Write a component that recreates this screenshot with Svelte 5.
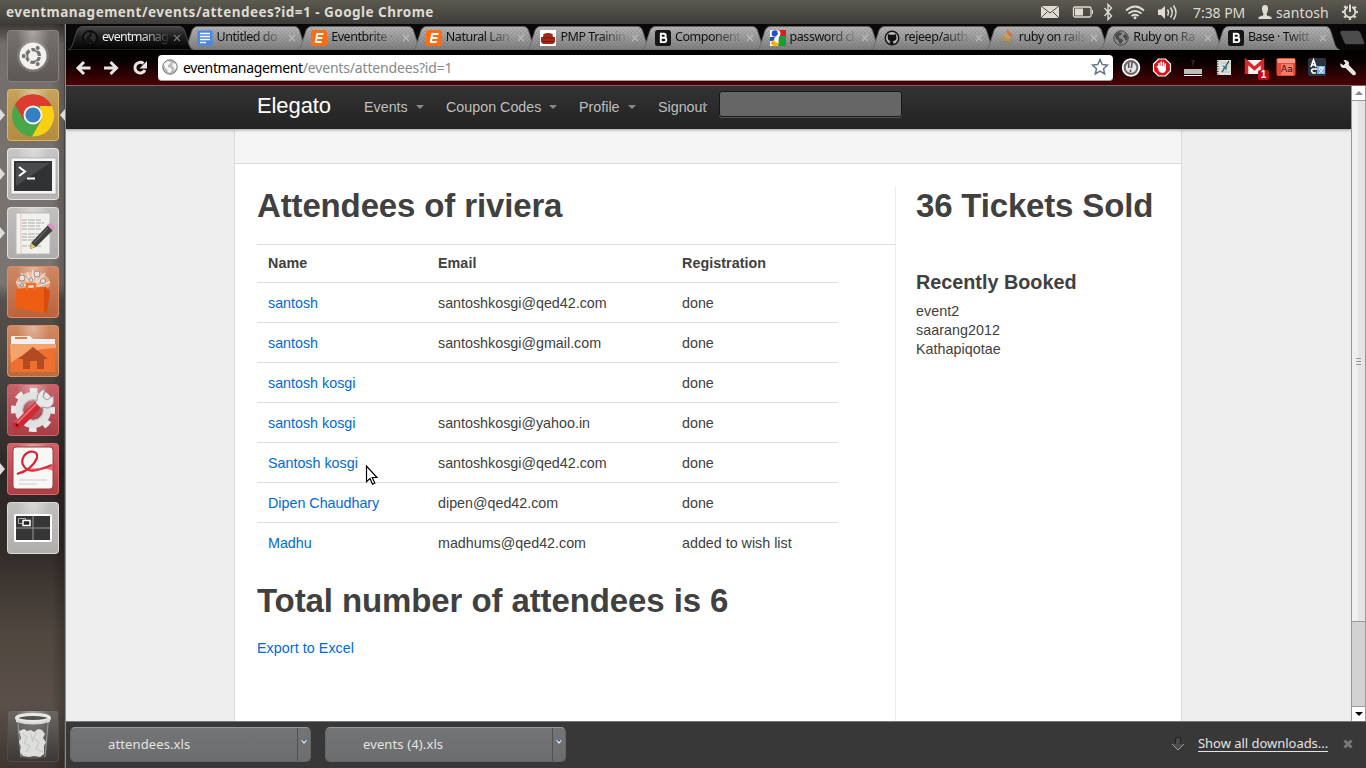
<script>
  const tabs = [
    { icon: 'darkglobe', title: 'eventmanag', active: true },
    { icon: 'doc', title: 'Untitled do' },
    { icon: 'eb', title: 'Eventbrite ·' },
    { icon: 'eb', title: 'Natural Lan' },
    { icon: 'sofa', title: 'PMP Trainin' },
    { icon: 'boot', title: 'Component' },
    { icon: 'google', title: 'password cl' },
    { icon: 'github', title: 'rejeep/auth' },
    { icon: 'so', title: 'ruby on rails' },
    { icon: 'globe', title: 'Ruby on Ra' },
    { icon: 'boot', title: 'Base · Twitt' }
  ];
  const exts = ['shield', 'adblock', 'input', 'note', 'gmail', 'dict', 'translate', 'wrench'];
  const launcher = [
    { k: 'ubuntu', a: '#77726e', b: '#5b5754', e: '#86827e' },
    { k: 'chromium', a: '#c6a35b', b: '#b28b3e', e: '#dcb75f', run: true, focus: true },
    { k: 'term', a: '#c6c6c6', b: '#b4b4b4', e: '#e4e4e4', run: true },
    { k: 'edit', a: '#c2bfbf', b: '#aeabac', e: '#dedcdc', run: true },
    { k: 'bag', a: '#d08764', b: '#b8633d', e: '#dc8c63' },
    { k: 'home', a: '#d08960', b: '#b96a3f', e: '#dc925f' },
    { k: 'gear', a: '#c5636a', b: '#a83e46', e: '#d45f66' },
    { k: 'pdf', a: '#cd646a', b: '#ae3e43', e: '#df686c', run: true },
    { k: 'work', a: '#c0c0be', b: '#aeaeac', e: '#dadad8' }
  ];
  const attendees = [
    ['santosh', 'santoshkosgi@qed42.com', 'done'],
    ['santosh', 'santoshkosgi@gmail.com', 'done'],
    ['santosh kosgi', '', 'done'],
    ['santosh kosgi', 'santoshkosgi@yahoo.in', 'done'],
    ['Santosh kosgi', 'santoshkosgi@qed42.com', 'done'],
    ['Dipen Chaudhary', 'dipen@qed42.com', 'done'],
    ['Madhu', 'madhums@qed42.com', 'added to wish list']
  ];
  const booked = ['event2', 'saarang2012', 'Kathapiqotae'];
  const files = ['attendees.xls', 'events (4).xls'];
</script>

{#snippet favicon(k)}
  <svg class="fav" width="16" height="16" viewBox="0 0 16 16">
    {#if k === 'darkglobe'}
      <circle cx="8" cy="8" r="7.3" fill="#151515" stroke="#050505" />
      <path d="M3 4l3-2 2 1-2 3-2 2-1 2-1-3zM9 3l4 1 1 4-2 4-2-2-2-2 2-2z" fill="#2f2f2f" />
    {:else if k === 'globe' || k === 'urlglobe'}
      <circle cx="8" cy="8" r="7.2" fill={k === 'globe' ? '#8b8b8b' : '#b9b9b9'} stroke={k === 'globe' ? '#444' : '#777'} />
      <path d="M2 5l3-3 4 1-1 2-2 1 0 2 3 1 1 2-2 3-2-1-1-3-2-1zM11 4l3 1 0.5 4-2 2-1-3-1.500-1z" fill={k === 'globe' ? '#4b4b4b' : '#f6f6f6'} />
    {:else if k === 'doc'}
      <path d="M.5.5h15v15H.5z" fill="#4a86e8" />
      <path d="M3 3.500h10M3 6.500h10M3 9.500h10M3 12.500h6" stroke="#fff" stroke-width="1.400" />
    {:else if k === 'eb'}
      <rect width="16" height="16" rx="2.500" fill="#ff6d13" />
      <path d="M6 4h6.500M5.300 8h6M4.200 12h6.500M6.300 3.500L4.700 12.500" stroke="#fff" stroke-width="2" fill="none" />
    {:else if k === 'sofa'}
      <path d="M0 0h16v16H0z" fill="#fff" />
      <path d="M3.500 4Q8 2 12.500 4L13 7h2v5l-2 2H3l-2-2V7h2z" fill="#a5281b" />
      <path d="M3 8h10M2 11.500h12" stroke="#6f1710" />
    {:else if k === 'boot'}
      <rect width="16" height="16" rx="2.500" fill="#151515" />
      <path d="M5.800 3.800h3a1.800 1.800 0 0 1 0 3.900h-3zM5.800 7.700h3.300a2 2 0 0 1 0 4.400H5.800z" stroke="#fff" stroke-width="1.900" fill="none" />
    {:else if k === 'google'}
      <path d="M0 0h16v16H0z" fill="#fff" />
      <path d="M8 0h8v6H10z" fill="#e11b1b" /><path d="M9 6h7v10H8z" fill="#12a03c" /><path d="M0 7h5v4H0z" fill="#2450b8" />
      <circle cx="5" cy="3.500" r="3.300" fill="#2853c6" /><ellipse cx="5" cy="13" rx="4" ry="3" fill="#f5b400" />
      <path d="M8 1q3 3-1 6t1 5" stroke="#fff" stroke-width="2.500" fill="none" />
    {:else if k === 'github'}
      <circle cx="8" cy="8" r="7.500" fill="#151515" /><circle cx="8" cy="8" r="6" fill="#bbb" />
      <path d="M4 4l2 .8h4L12 4q.3 1 .1 2 1 3-1 4.500l-2 .6.500 3.400H6.200v-1.700l-2.200-1h2l.7-.900Q3 10.500 3.800 6 3.500 5 4 4z" fill="#111" />
    {:else if k === 'so'}
      <path d="M1.500 9.500v5h11v-5M3.500 12h7" stroke="#8b8478" stroke-width="1.600" fill="none" />
      <path d="M3.500 8.700l7 1.300" stroke="#c99430" stroke-width="2" /><path d="M4.500 4.500l6.500 3.700" stroke="#ef9a22" stroke-width="2" /><path d="M8 1l5 5" stroke="#f2642a" stroke-width="2" />
    {/if}
  </svg>
{/snippet}

{#snippet ext(k)}
  <svg class="ext" width="22" height="22" viewBox="0 0 22 22">
    {#if k === 'shield'}
      <circle cx="11" cy="10.500" r="8.300" fill="#6a6a6a" stroke="#fff" stroke-width="1.800" />
      <circle cx="11" cy="10.500" r="5.300" fill="#e6e6e6" /><path d="M12.300 4.500l-1 6.500M8.700 6v5M10.500 12.500v2.500" stroke="#555" stroke-width="1.600" />
    {:else if k === 'adblock'}
      <path d="M7.500 2h7l5 5v7l-5 5h-7l-5-5V7z" fill="#d8141a" stroke="#fff" stroke-width="1.200" />
      <path d="M8 10V6.500M10.200 9V5M12.400 9V5.500M14.300 10V7" stroke="#fff" stroke-width="1.500" stroke-linecap="round" />
      <path d="M7.300 9H15v4q-1 3-4 3-2.500 0-3.700-3z" fill="#fff" /><path d="M6 9l2.500 3" stroke="#fff" stroke-width="1.500" />
    {:else if k === 'input'}
      <path d="M9.500 4q1.500-1.500 2.500 0 0 1.300-1.300 2v1.500M10.700 8.500v1" stroke="#3a3434" stroke-width="1.200" fill="none" />
      <path d="M2 12h18v5H2z" fill="#bcbcbc" /><path d="M2 18.500h18" stroke="#fff" />
    {:else if k === 'note'}
      <path d="M4 3h14v15H4z" fill="#dfdfda" /><path d="M4.500 4v14" stroke="#333" stroke-dasharray="1 1.500" stroke-width="2" />
      <path d="M8 6h9M8 15h9" stroke="#b9b9c4" /><path d="M16 4L9 15" stroke="#374a40" stroke-width="1.300" /><path d="M9 8.500l5.500 1-1.500 4z" fill="#2a86b6" /><path d="M13.500 9.500l1.500-1.500 1 2z" fill="#f1cb24" />
    {:else if k === 'gmail'}
      <path d="M1 3h19v14H1z" fill="#f4f1f1" /><path d="M2.500 17V4.500l8 7 8-7V17" stroke="#d9272a" stroke-width="3.500" fill="none" />
    {:else if k === 'dict'}
      <rect x="1.500" y="1" width="19" height="18" rx="2" fill="#e44b3b" /><path d="M2 2h18v4H3z" fill="#fa9b87" />
    {:else if k === 'translate'}
      <rect x="2" y="1" width="18" height="18" rx="2" fill="#2b3440" />
      <path d="M5 10l2.500-7L10 10M6 8h3M11 12H7q-3 1 0 4h3" stroke="#fff" stroke-width="1.700" fill="none" />
      <path d="M11 9h8v8h-8z" fill="#78b3ea" /><path d="M12.500 11h5.500M15 9.500v2M17 11q-1 4-4 5M13 12l4 4" stroke="#fff" fill="none" />
    {:else}
      <path d="M3.500 6.200l3 2 2-2-2-3Q10 2 12 5.500L11.800 8l6.700 7q1.200 2.500-1 3.300-1.500.2-2.300-.9L8.500 11 6 11Q2.500 9.500 3.500 6.200z" fill="#eae6e6" />
    {/if}
  </svg>
{/snippet}

{#snippet app(k)}
  <svg width="52" height="52" viewBox="0 0 52 52">
    {#if k === 'ubuntu'}
      <circle cx="26" cy="26" r="16" fill="#aaa5a1" opacity=".35" /><circle cx="26" cy="26" r="13.500" fill="#f2f1f0" />
      <circle cx="26" cy="26" r="6.400" fill="none" stroke="#77716d" stroke-width="3.200" stroke-dasharray="11.400 2" stroke-dashoffset="-1" />
      <g fill="#77716d" stroke="#f2f1f0"><circle cx="16.700" cy="26" r="2.500" /><circle cx="30.700" cy="18" r="2.500" /><circle cx="30.700" cy="34" r="2.500" /></g>
    {:else if k === 'chromium'}
      <circle cx="26" cy="26.500" r="21" fill="#48a747" />
      <path d="M8 15.500A21 21 0 0 1 44.800 17H26L16.500 30.500z" fill="#dc3b32" />
      <path d="M44.800 17A21 21 0 0 1 25 47.500L35 30 33 17z" fill="#fbcf12" />
      <circle cx="26" cy="26" r="9.500" fill="#f2f2f2" /><circle cx="26" cy="26" r="7.600" fill="#377fc0" />
    {:else if k === 'term'}
      <rect x="4" y="10" width="45" height="36" rx="1" fill="#f4f4f4" stroke="#999" stroke-width=".6" /><path d="M7 13h38v30H7z" fill="#303234" /><path d="M9 15h34L9 38z" fill="#484b4e" />
      <path d="M12 19l6 4.500-6 4.500M20 30.500h8" stroke="#fff" stroke-width="2" fill="none" />
    {:else if k === 'edit'}
      <path d="M9 6h34v41H9z" fill="#f1f1ee" stroke="#bbb" />
      <path d="M15 13h20M15 16h22M15 19h18M15 22h20M15 27h22M15 30h20M15 33h17M15 39h20" stroke="#aaa" stroke-dasharray="5 1 7 1" /><path d="M14 6v41" stroke="#f2c1c1" />
      <path d="M24 36L41 18l5 5-17 17-6 2z" fill="#404040" /><path d="M40 18l3-2 5 4-2 4z" fill="#df91bd" /><path d="M24 36l5 4-6 2z" fill="#e1c27c" />
      <path d="M27 36l14-15" stroke="#777" />
    {:else if k === 'bag'}
      <ellipse cx="26" cy="17" rx="17" ry="11" fill="#ffd9c0" opacity=".5" />
      <path d="M26 22L14 7M26 22V4M26 22L38 7M26 22L9 16M26 22l17-6M26 22L20 6M26 22l7-16" stroke="#fff1e6" stroke-width="1.500" opacity=".7" />
      <g fill="#f4ded4" stroke="#8896a0"><circle cx="15" cy="12" r="3" /><circle cx="30" cy="8" r="3" /><circle cx="36" cy="15" r="2.500" /><circle cx="24" cy="14" r="2" /><circle cx="15" cy="19" r="1.500" /></g>
      <path d="M9 23l30-2 4 4-3 22-31-5z" fill="#d94c0c" /><path d="M9 23l28-2v26L9 42z" fill="#ed5e12" /><path d="M20 24v-6h8v6" stroke="#f17124" stroke-width="2.500" fill="none" />
    {:else if k === 'home'}
      <path d="M4 11h19l3 3h22v9H4z" fill="#f0f0f0" /><path d="M8 13h12" stroke="#f3783d" stroke-width="2" />
      <path d="M3 19h46l-1 28H4z" fill="#ed7031" /><path d="M3 19h46v4Q20 24 4 38z" fill="#f5a36c" />
      <path d="M26 22l15 12h-4v10h-7v-8h-7v8h-7V34h-5z" fill="#b34a22" />
    {:else if k === 'gear'}
      <circle cx="26" cy="26" r="19" fill="none" stroke="#e9e9e9" stroke-width="6" stroke-dasharray="7.460 7.460" stroke-dashoffset="3.700" />
      <circle cx="26" cy="26" r="14" fill="none" stroke="#e1e1e1" stroke-width="8" /><circle cx="26" cy="26" r="10.500" fill="none" stroke="#bbb" />
      <path d="M30 16q0-9 8-11l-2 8 4 3 6-4q3 9-5 12l-6-1-3 2-5-4z" fill="#e8e8e8" stroke="#999" />
      <path d="M8 38L28 18l6 6-21 21q-4 2-7-2-1-3 2-5z" fill="#cc2a34" /><path d="M10 39l19-19" stroke="#ed6870" stroke-width="2" /><circle cx="10" cy="41" r="1.500" fill="#6e1218" />
    {:else if k === 'pdf'}
      <rect x="6" y="4" width="40" height="42" rx="3" fill="#f7f7f5" stroke="#9d3a3e" />
      <path d="M10 31q15-4 20-16c2-7-8-9-13-2-5 8 2 17 13 14q8-2 15-5" stroke="#d92431" stroke-width="2.200" fill="none" /><path d="M20 26q12 5 26-5v7q-8-4-26-2z" fill="#e04b53" opacity=".8" />
      <path d="M12 37h28M12 41h18" stroke="#ccc" />
    {:else if k === 'work'}
      <rect x="7" y="12" width="38" height="28" rx="1.500" fill="#fff" /><path d="M9 14h34v24H9z" fill="#363636" />
      <path d="M26 14v24M9 26h34" stroke="#999" /><path d="M11.500 16.500h7v5h-7z" fill="#333" stroke="#aaa" /><path d="M16 18.500h7v5h-7z" fill="#222" stroke="#fff" stroke-width="1.500" />
    {:else}
      <path d="M9 9h34l-4 38q-13 4-26 0z" fill="#6a6867" opacity=".55" /><path d="M11 13l3 34M41 13l-3 34" stroke="#999" />
      <path d="M12 21l5-2 3 2 4-1 3 2 4-3 4 1 3 4-2 4 3 4-2 4v8l-4 3-6-1-5 1-6-1-3-4 1-5-2-5 2-4z" fill="#dddedc" />
      <path d="M15 23l5 4-3 6 6 3-4 6M30 22l-4 6 6 4-3 7 7 3M24 24l2 8" stroke="#c3c4c2" fill="none" />
      <ellipse cx="26" cy="8" rx="16.500" ry="3.500" fill="#55504d" stroke="#e8e8e6" stroke-width="3" /><path d="M9 9q17 7 34 0v3q-17 5-34 0z" fill="#d8d8d6" />
    {/if}
  </svg>
{/snippet}

<div class="desktop">
  <header class="panel">
    <span class="wtitle">eventmanagement/events/attendees?id=1 - Google Chrome</span>
    <div class="tray">
      <svg width="175" height="24" viewBox="0 0 175 24">
        <path d="M1 6h18v12H1z" fill="#dfdbd2" /><path d="M1 6l9 7 9-7M1 18l6-6M19 18l-6-6" stroke="#4b4943" fill="none" />
        <rect x="33.500" y="7" width="17.500" height="10" rx="1.500" fill="none" stroke="#dfdbd2" stroke-width="1.300" /><path d="M35 8.500h8v7h-8z" fill="#dfdbd2" /><path d="M52.500 10v4" stroke="#dfdbd2" />
        <path d="M64.500 8l7 8-3.500 3.500V4.500L71.500 8l-7 8" stroke="#dfdbd2" stroke-width="1.400" fill="none" />
        <path d="M86 10.500q9-8 18 0M88.500 13.500q6.500-5 13 0M91.500 16q3.500-2.500 7 0" stroke="#dfdbd2" stroke-width="2" fill="none" /><circle cx="95" cy="17.800" r="1.500" fill="#dfdbd2" />
        <path d="M118 9.500h3l4-3.500v13l-4-4h-3z" fill="#dfdbd2" /><path d="M127.500 9.500q2 3 0 6M130.500 7.500q3.500 5 0 10M133.500 5.500q5 7 0 14" stroke="#dfdbd2" stroke-width="1.500" fill="none" />
      </svg>
      <span class="clock">7:38 PM</span>
      <svg class="person" width="14" height="16" viewBox="0 0 14 16"><path d="M7 1q3.500 0 3 4.500Q9.500 9 8.500 10l.5 1.500 4.500 1.500v2H.500v-2L5 11.500l.5-1.500Q4.500 9 4 5.500 3.500 1 7 1z" fill="#dfdbd2" /></svg>
      <span class="user">santosh</span>
      <svg class="power" width="18" height="18" viewBox="0 0 18 18"><circle cx="9" cy="9" r="5.300" fill="none" stroke="#dfdbd2" stroke-width="1.800" /><circle cx="9" cy="9" r="7" fill="none" stroke="#dfdbd2" stroke-width="2" stroke-dasharray="2.400 3.100" stroke-dashoffset="1.200" /><path d="M9 1v8" stroke="#4b4943" stroke-width="4" /><path d="M9 1.500V9" stroke="#dfdbd2" stroke-width="2" /></svg>
    </div>
  </header>

  <div class="body">
    <aside class="launcher">
      {#each launcher as l}
        <div class="tile" style="--a:{l.a};--b:{l.b};--e:{l.e}">
          {@render app(l.k)}
          {#if l.run}<i class="run"></i>{/if}
          {#if l.focus}<i class="focus"></i>{/if}
        </div>
      {/each}
      <div class="tile trash" style="--a:#6c6765;--b:#3b3736;--e:#504b49">{@render app('trash')}</div>
    </aside>

    <section class="chrome">
      <div class="tabs">
        {#each tabs as t}
          <div class="tab" class:active={t.active}>
            <svg class="shape" width="128" height="24" viewBox="0 0 128 24" preserveAspectRatio="none">
              <defs>
                <linearGradient id="tg" x2="0" y2="1"><stop offset="0" stop-color="#bababa" /><stop offset="1" stop-color="#7e7e7e" /></linearGradient>
                <linearGradient id="ta" x2="0" y2="1"><stop offset="0" stop-color="#484848" /><stop offset=".45" stop-color="#1c1c1c" /><stop offset="1" stop-color="#020202" /></linearGradient>
                <pattern id="chk" width="4" height="4" patternUnits="userSpaceOnUse"><path d="M0 0h2v2H0zM2 2h2v2H2z" fill="#555" opacity=".2" /></pattern>
              </defs>
              <path d="M0 24Q3 23.500 4.500 19L9 5Q10.500.500 15 .500H113Q117 .500 118.500 5L123 19Q124.500 23.500 128 24z" fill={t.active ? 'url(#ta)' : 'url(#tg)'} stroke={t.active ? '#555' : '#686868'} stroke-width=".8" />
              {#if !t.active}<path d="M0 24Q3 23.500 4.500 19L9 5Q10.500.500 15 .500H113Q117 .500 118.500 5L123 19Q124.500 23.500 128 24z" fill="url(#chk)" />{/if}
            </svg>
            {@render favicon(t.icon)}
            <span class="tt">{t.title}</span>
            <svg class="x" width="8" height="8" viewBox="0 0 8 8"><path d="M1 1l6 6M7 1L1 7" stroke={t.active ? '#777' : '#b9b9b9'} stroke-width="1.300" /></svg>
          </div>
        {/each}
        <svg class="newtab" width="26" height="16" viewBox="0 0 26 16"><path d="M3 .500H19q2 0 3 3l3.500 9q.500 2-1.500 2H8q-2 0-3-2L1 3Q.500.500 3 .500z" fill="#4c4c4c" stroke="#161616" /></svg>
      </div>

      <div class="toolbar">
        <svg class="nav" width="80" height="20" viewBox="0 0 80 20">
          <g stroke="#e9e5e5" stroke-width="3" fill="none"><path d="M15.500 10H3M9 4l-6 6 6 6" /><path d="M29 10h12.500M35.500 4l6 6-6 6" /><path d="M68.500 5.500a5.300 5.300 0 1 0 1.500 6.500" /></g>
          <path d="M72 3v7.500h-7.500z" fill="#e9e5e5" />
        </svg>
        <div class="omni">
          {@render favicon('urlglobe')}
          <span class="url"><b>eventmanagement</b>/events/attendees?id=1</span>
          <svg class="star" width="18" height="18" viewBox="0 0 18 18"><path d="M9 1.500l2.200 5 5.300.500-4 3.700 1.200 5.300L9 13.200 4.300 16l1.200-5.300-4-3.700 5.300-.5z" fill="#fff" stroke="#68748f" stroke-width="1.500" /></svg>
        </div>
        <div class="exts">
          {#each exts as e}
            <div class="extbox">
              {@render ext(e)}
              {#if e === 'gmail'}<span class="badge">1</span>{/if}
              {#if e === 'dict'}<span class="aa">Aa</span>{/if}
            </div>
          {/each}
        </div>
      </div>

      <div class="view">
        <div class="page">
          <nav class="topbar">
            <span class="brand">Elegato</span>
            <span class="m1">Events<i></i></span>
            <span class="m2">Coupon Codes<i></i></span>
            <span class="m3">Profile<i></i></span>
            <span class="m4">Signout<i></i></span>
            <div class="search"></div>
          </nav>
          <div class="container">
            <div class="strip"></div>
            <div class="cols">
              <main>
                <h1>Attendees of riviera</h1>
                <div class="tablewrap">
                  <table>
                    <thead><tr><th class="c1">Name</th><th class="c2">Email</th><th>Registration</th></tr></thead>
                    <tbody>
                      {#each attendees as [n, e, r]}
                        <tr><td><span class="link">{n}</span></td><td>{e}</td><td>{r}</td></tr>
                      {/each}
                    </tbody>
                  </table>
                </div>
                <h1 class="total">Total number of attendees is 6</h1>
                <span class="link export">Export to Excel</span>
              </main>
              <aside class="side">
                <h1>36 Tickets Sold</h1>
                <h3>Recently Booked</h3>
                {#each booked as b}<div class="bk">{b}</div>{/each}
              </aside>
            </div>
          </div>
        </div>
        <div class="scroll">
          <div class="btn up"><i></i></div>
          <div class="thumb"><i></i><i></i><i></i></div>
          <div class="trough"></div>
          <div class="btn down"><i></i></div>
        </div>
      </div>

      <footer class="downloads">
        {#each files as f}
          <div class="dl"><span>{f}</span><em><svg width="6" height="4" viewBox="0 0 6 4"><path d="M0 0h6L3 4z" fill="#eee" /><path d="M1 0h4L3 2z" fill="#3465b4" /></svg></em></div>
        {/each}
        <svg class="arr" width="14" height="14" viewBox="0 0 14 14"><path d="M4.500.500h5V7H13l-6 6-6-6h3.500z" fill="#4b4b4b" /><path d="M4.500 7V.800h5V7" stroke="#222" fill="none" /><path d="M1 7l6 6 6-6" stroke="#999" fill="none" /></svg>
        <span class="all">Show all downloads...</span>
        <svg class="cl" width="10" height="10" viewBox="0 0 10 10"><path d="M1.500 1.500l7 7M8.500 1.500l-7 7" stroke="#777" stroke-width="3" /></svg>
      </footer>
    </section>
  </div>
  <svg class="cursor" width="14" height="22" viewBox="0 0 14 22"><path d="M1.500 2v15.700l3.500-3.200 2.500 5.700 2.300-1-2.500-5.700h4.700z" fill="#fff" stroke="#000" stroke-width="1.200" /></svg>
</div>

<style>
  :global(body) { margin: 0; overflow: hidden; }
  .desktop { width: 1366px; height: 768px; display: flex; flex-direction: column; position: relative; overflow: hidden; font-family: "Noto Sans", "Open Sans", sans-serif; }
  svg { display: block; flex: none; }
  .panel { height: 24px; flex: none; display: flex; justify-content: space-between; align-items: center; background: linear-gradient(#5c5a50, #3d3c38); color: #dfdbd2; }
  .wtitle { font-weight: 700; font-size: 13.5px; letter-spacing: .48px; padding-left: 6px; white-space: nowrap; }
  .tray { display: flex; align-items: center; font-size: 14px; width: 326px; }
  .clock { width: 53px; margin-left: -22px; white-space: nowrap; letter-spacing: -.05px; }
  .person { margin-left: 12px; }
  .user { margin-left: 4px; width: 54px; letter-spacing: .1px; }
  .power { margin-left: 11px; }
  .body { flex: 1; display: flex; min-height: 0; }
  .launcher { width: 65px; flex: none; box-sizing: border-box; display: flex; flex-direction: column; gap: 7px; padding: 6px 0 6px 7px; border-right: 1px solid #4b4743;
    background: linear-gradient(90deg, transparent 80%, rgba(0,0,0,.22)), linear-gradient(#3a3734 0, #746e6a 20px, #7b7571 260px, #55504c 276px, #4b4643 340px, #3a3532 400px, #2c2725 450px, #332d2a 530px, #50473f 610px, #5a5049 680px, #40362f 744px); }
  .tile { width: 52px; height: 52px; flex: none; position: relative; border-radius: 4px; background: radial-gradient(ellipse at 50% 0, rgba(255,255,255,.4), transparent 45%), linear-gradient(var(--a), var(--b)); box-shadow: inset 0 0 0 1px var(--e); }
  .tile.trash { margin-top: auto; }
  .run, .focus { position: absolute; top: 20px; width: 0; height: 0; border: 6px solid transparent; }
  .run { left: -7px; border-left: 5px solid #ddd; border-right: 0; }
  .focus { right: -6px; border-right: 5px solid #ddd; border-left: 0; }
  .chrome { flex: 1; display: flex; flex-direction: column; min-width: 0; border-left: 1px solid #8a8785; background: #000; }
  .tabs { height: 26px; flex: none; display: flex; padding: 2px 0 0 2px; box-sizing: border-box; background: #080808; }
  .tab { width: 114.600px; height: 24px; flex: none; display: flex; align-items: center; position: relative; box-sizing: border-box; padding-left: 14px; font-size: 12.5px; color: #111; }
  .tab.active { color: #f0f0f0; z-index: 2; }
  .shape { position: absolute; left: 0; top: 0; width: 126px; height: 24px; }
  .fav { position: relative; }
  .tt { position: relative; width: 70px; margin-left: 4px; white-space: nowrap; letter-spacing: -.45px; line-height: 22px; top: -1px; -webkit-mask-image: linear-gradient(90deg, #000 55%, transparent 98%); mask-image: linear-gradient(90deg, #000 55%, transparent 98%); }
  .tab.active .tt { letter-spacing: -.75px; }
  .x { position: relative; margin-left: 1px; }
  .newtab { margin: 4px 0 0 10px; }
  .toolbar { height: 36px; flex: none; box-sizing: border-box; display: flex; align-items: center; border-bottom: 1px solid #756667; background: linear-gradient(#000, #0b0001 35%, #4b0206); }
  .nav { margin: 0 0 0 9px; }
  .omni { width: 955px; height: 26px; margin: 0 0 0 3px; box-sizing: border-box; display: flex; align-items: center; background: #fff; border-radius: 4px; border-bottom: 1px solid #b49a9b; padding: 0 4px; }
  .url { font-size: 14px; margin-left: 5px; color: #888; flex: 1; letter-spacing: -.17px; }
  .url b { color: #000; font-weight: 400; letter-spacing: -.35px; }
  .exts { display: flex; margin-left: 7px; gap: 9px; }
  .extbox { position: relative; width: 22px; }
  .badge { position: absolute; left: 14px; top: 13px; width: 11px; height: 10px; border-radius: 2px; background: #c00b1c; color: #fff; font: 700 10px/10px "Liberation Sans", sans-serif; text-align: center; }
  .aa { position: absolute; left: 6px; top: 7px; font: 9px/11px "DejaVu Sans", sans-serif; color: #3d0905; background: #f47c67; }
  .view { flex: 1; display: flex; min-height: 0; font-family: "Liberation Sans", Arial, sans-serif; }
  .page { flex: 1; min-width: 0; background: #eee; display: flex; flex-direction: column; overflow: hidden; }
  .topbar { height: 43px; flex: none; box-sizing: border-box; padding-left: 191px; display: flex; align-items: flex-start; background: linear-gradient(#333, #222); color: #bfbfbf; font-size: 14.300px; line-height: 42px; box-shadow: 0 1px 3px rgba(0,0,0,.35); z-index: 1; white-space: nowrap; }
  .brand { font-size: 22px; color: #fff; width: 107px; line-height: 39px; letter-spacing: -.1px; }
  .topbar i { display: inline-block; border: 4px solid transparent; border-top-color: #8a8a8a; border-bottom: 0; margin-left: 9px; vertical-align: 3px; }
  .topbar .m1 i, .topbar .m2 i, .topbar .m3 i { margin-left: 8px; }
  .m1 { width: 82px; } .m2 { width: 133px; } .m3 { width: 79px; } .m4 { width: 61px; }
  .topbar .m4 i { margin-left: -5px; vertical-align: 5px; border-width: 3px; border-bottom-width: 0; }
  .search { width: 181px; height: 24px; margin-top: 5px; border: 1px solid #171717; border-radius: 3px; background: #666; box-shadow: 0 1px 0 #555; }
  .container { width: 946px; flex: 1; box-sizing: content-box; margin-left: 168px; background: #fff; border: solid #ddd; border-width: 0 1px; display: flex; flex-direction: column; }
  .strip { height: 34px; background: #f5f5f5; border-bottom: 1px solid #ddd; }
  .cols { flex: 1; display: flex; padding: 22px 0 0 22px; color: #404040; font-size: 14.300px; }
  main { width: 638px; border-right: 1px solid #eee; }
  h1 { font-size: 33px; line-height: 40px; margin: 0; white-space: nowrap; letter-spacing: -.14px; }
  .tablewrap { margin-top: 18px; border-top: 1px solid #ddd; }
  table { width: 581px; border-collapse: collapse; table-layout: fixed; }
  th { text-align: left; height: 35px; padding: 0 0 2px 11px; letter-spacing: .06px; }
  td { border-top: 1px solid #ddd; height: 39px; padding: 0 0 0 11px; }
  .c1 { width: 159px; } .c2 { width: 233px; }
  .link { color: #0069d6; }
  .total { margin-top: 19px; letter-spacing: -.1px; }
  .export { display: block; margin-top: 19px; letter-spacing: .06px; }
  .side { padding-left: 20px; }
  .side h1 { letter-spacing: -.17px; }
  h3 { font-size: 19.800px; line-height: 40px; margin: 36px 0 0; }
  .bk { line-height: 19px; letter-spacing: .04px; }
  .scroll { width: 15px; flex: none; box-sizing: border-box; border: solid #999; border-width: 0 1px 0 1px; display: flex; flex-direction: column; background: #fff; }
  .btn { height: 14px; display: flex; align-items: center; justify-content: center; background: #fff; }
  .btn i { border: 4px solid transparent; }
  .up { border-bottom: 1px solid #999; } .up i { border-bottom-color: #888; border-top: 0; }
  .down { border-top: 1px solid #999; } .down i { border-top-color: #000; border-bottom: 0; }
  .thumb { height: 520px; display: flex; flex-direction: column; gap: 2px; align-items: center; justify-content: center; background: linear-gradient(90deg, #f0f0f0 50%, #e4e4e4 50%); border-bottom: 1px solid #999; }
  .thumb i { width: 5px; height: 1px; background: #999; }
  .trough { flex: 1; background: #d2d2d2; }
  .downloads { height: 47px; flex: none; box-sizing: border-box; border-top: 1px solid #777; background: #383838; display: flex; align-items: center; padding: 0 12px 2px 4px; }
  .dl { width: 241px; height: 35px; margin-right: 14px; box-sizing: border-box; display: flex; align-items: center; background: linear-gradient(#737475, #6c6d6e); border: 1px solid #656667; border-top-color: #999; border-radius: 5px; color: #e3e3e3; font-size: 13px; letter-spacing: .12px; }
  .dl span { flex: 1; padding-left: 37px; }
  .dl em { align-self: stretch; width: 13px; border-left: 1px solid #505152; box-sizing: border-box; padding: 12px 0 0 3px; }
  .arr { margin-left: auto; }
  .all { margin-left: 13px; width: 130px; color: #e3e3e3; font-size: 13px; line-height: 15px; border-bottom: 1px solid #e3e3e3; white-space: nowrap; letter-spacing: -.03px; }
  .cl { margin: 0 1px 0 15px; }
  .cursor { position: absolute; left: 365px; top: 464px; z-index: 5; }
</style>
